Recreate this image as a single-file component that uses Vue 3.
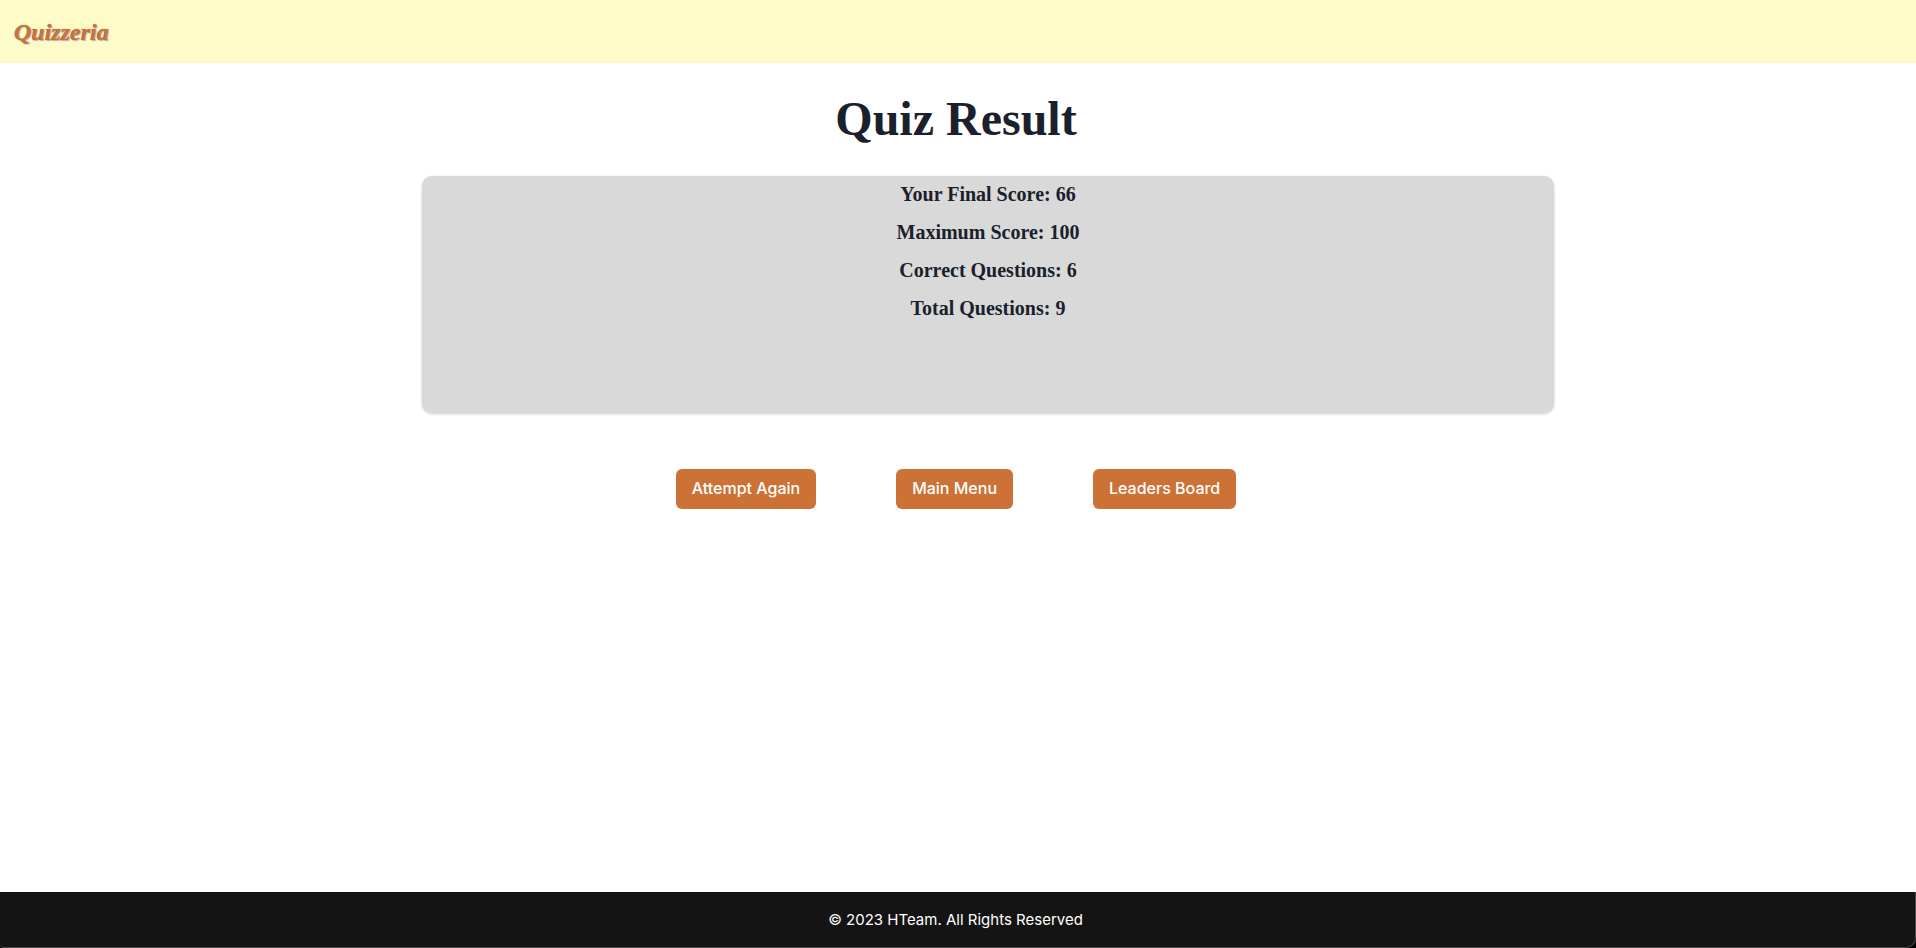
<script setup>
const results = [
  { label: 'Your Final Score', value: 66 },
  { label: 'Maximum Score', value: 100 },
  { label: 'Correct Questions', value: 6 },
  { label: 'Total Questions', value: 9 },
]
const actions = ['Attempt Again', 'Main Menu', 'Leaders Board']
</script>

<template>
  <div class="page">
    <header class="bar"><a class="brand" href="#">Quizzeria</a></header>
    <main class="main">
      <h1 class="title">Quiz Result</h1>
      <section class="card">
        <p v-for="r in results" :key="r.label" class="line">{{ r.label }}: {{ r.value }}</p>
      </section>
      <div class="actions">
        <button v-for="a in actions" :key="a" type="button" class="btn">{{ a }}</button>
      </div>
    </main>
    <footer class="footer"><p class="copy">© 2023 HTeam. All Rights Reserved</p></footer>
  </div>
</template>

<style>
body {
  background: #fff;
}
</style>

<style scoped>
.page {
  display: flex;
  flex-direction: column;
  min-height: 100vh;
  background: #000;
  color: #1a202c;
  font-family: Inter, sans-serif;
  font-size: 16px;
  line-height: 24px;
}
.bar {
  display: flex;
  align-items: center;
  height: 63px;
  padding: 0 14px;
  background: #fdfbc8;
}
.brand {
  color: #cd7237;
  font-family: "Liberation Serif", serif;
  font-size: 24px;
  font-style: italic;
  font-weight: 700;
  line-height: 32px;
  text-decoration: none;
  text-shadow: 0 0 1px #8a6a50, 1px 1px 1px #b9b4c4;
}
.main {
  flex: 1;
  padding-right: 4px;
  background: #fff;
}
.title {
  margin: 26px 0 27px;
  font-family: "Liberation Serif", serif;
  font-size: 48px;
  font-weight: 700;
  line-height: 60px;
  text-align: center;
}
.card {
  box-sizing: border-box;
  width: calc(60% - 16px);
  min-height: 237px;
  margin: 0 0 0 calc(20% + 40px);
  padding-top: 3px;
  border-radius: 10px;
  background: #d9d9d9;
  box-shadow: 0 1px 3px rgba(0, 0, 0, 0.2);
}
.line {
  margin: 0 0 8px;
  font-family: "Liberation Serif", serif;
  font-size: 20px;
  font-weight: 700;
  line-height: 30px;
  text-align: center;
}
.actions {
  display: flex;
  justify-content: center;
  gap: 80px;
  margin-top: 56px;
}
.btn {
  height: 40px;
  padding: 0 16px 2px;
  border: 0;
  border-radius: 6px;
  background: #cd7237;
  color: #fff;
  font-family: Inter, sans-serif;
  font-size: 16px;
  font-weight: 500;
  cursor: pointer;
}
.footer {
  padding: 16px 4px 15px 0;
  border-right: 1px solid #4a4a4a;
  border-bottom: 1px solid #4a4a4a;
  border-radius: 0 0 10px 4px;
  background: #141414;
  color: #fff;
  text-align: center;
}
.copy {
  margin: 0;
  font-size: 15px;
}
</style>
